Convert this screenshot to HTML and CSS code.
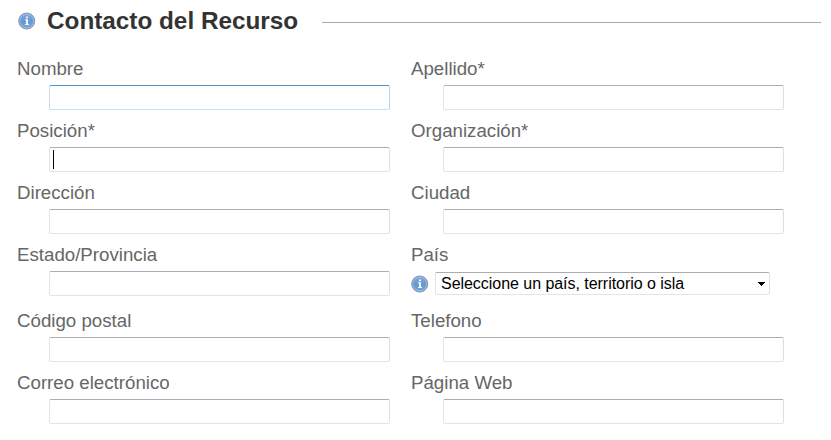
FILE: index.html
```
<!DOCTYPE html>
<html lang="es">
<head>
<meta charset="utf-8">
<title>Contacto del Recurso</title>
<link rel="stylesheet" href="styles.css">
</head>
<body>
<svg class="defs" width="0" height="0" aria-hidden="true">
  <defs>
    <linearGradient id="blue" x1="0" y1="0" x2="0" y2="1">
      <stop offset="0" stop-color="#88ade0"/><stop offset=".5" stop-color="#6797d0"/><stop offset="1" stop-color="#76a6dc"/>
    </linearGradient>
    <symbol id="info" viewBox="0 0 18 18">
      <circle cx="8.7" cy="9" r="8" fill="url(#blue)" stroke="#8493aa" stroke-width="1"/>
      <circle cx="8.7" cy="9" r="6.9" fill="none" stroke="#9fc0e8" stroke-width=".9"/>
      <path d="M8 4.5h2v1.8H8zM7 7.2h3V12h1v1H7v-1h1V8.200H7z" fill="#f3f8ff"/>
    </symbol>
  </defs>
</svg>
<form class="contact">
  <header class="heading">
    <svg class="info"><use href="#info"/></svg>
    <h1>Contacto del Recurso</h1>
    <span class="rule"></span>
  </header>
  <div class="fields">
    <div class="field"><label>Nombre</label><div class="input active"></div></div>
    <div class="field"><label>Apellido*</label><div class="input"></div></div>
    <div class="field"><label>Posición*</label><div class="input"><span class="caret"></span></div></div>
    <div class="field"><label>Organización*</label><div class="input"></div></div>
    <div class="field"><label>Dirección</label><div class="input"></div></div>
    <div class="field"><label>Ciudad</label><div class="input"></div></div>
    <div class="field"><label>Estado/Provincia</label><div class="input"></div></div>
    <div class="field"><label>País</label>
      <div class="country">
        <svg class="info"><use href="#info"/></svg>
        <div class="select"><span>Seleccione un país, territorio o isla</span>
          <svg class="arrow" viewBox="0 0 7 4" shape-rendering="crispEdges"><path d="M0 0h7v1H6v1H5v1H4v1H3V3H2V2H1V1H0z"/></svg>
        </div>
      </div>
    </div>
    <div class="field"><label>Código postal</label><div class="input"></div></div>
    <div class="field"><label>Telefono</label><div class="input"></div></div>
    <div class="field"><label>Correo electrónico</label><div class="input"></div></div>
    <div class="field"><label>Página Web</label><div class="input"></div></div>
  </div>
</form>
</body>
</html>
```
FILE: styles.css
```
* { box-sizing: border-box; }
body { margin: 0; background: #fff; color: #666; font-family: "Liberation Sans", Arial, sans-serif; }
.defs { display: block; }
.info { display: block; flex: none; width: 18px; height: 18px; }
.heading { display: flex; align-items: center; height: 42px; padding: 0 10px 0 18px; }
h1 { margin: 0 24px 0 11px; color: #333; font-size: 24.3px; line-height: 28px; white-space: nowrap; }
.rule { flex: 1; height: 1px; margin-top: 2px; background: #aaa; }
.fields {
  display: grid;
  grid-template-columns: 394px 394px;
  grid-template-rows: 62px 62px 62px 66px 62px 62px;
  padding: 15px 0 0 16px;
}
label { display: block; height: 28px; padding-left: 1px; font-size: 18.7px; line-height: 24px; }
.input, .select {
  border: 1px solid #e3e3eb;
  border-top-color: #abadb3;
  border-right-color: #dbdfe6;
  border-left-color: #e2e3ea;
  border-radius: 2px;
}
.input { width: 341px; height: 25px; margin-left: 33px; padding: 2px 3px; }
.input.active { border-color: #5794bf #b7d5ea #c7e2f1 #c5daed; }
.caret { display: block; width: 1px; height: 19px; background: #000; }
.country { display: flex; align-items: center; height: 25px; gap: 6px; padding-left: 1px; }
.select {
  display: flex; align-items: center; justify-content: space-between;
  width: 335px; height: 23px; padding: 0 4px 0 5px;
  color: #000; font-size: 16px; line-height: 21px; letter-spacing: -0.04px;
}
.arrow { width: 7px; height: 4px; }
```
